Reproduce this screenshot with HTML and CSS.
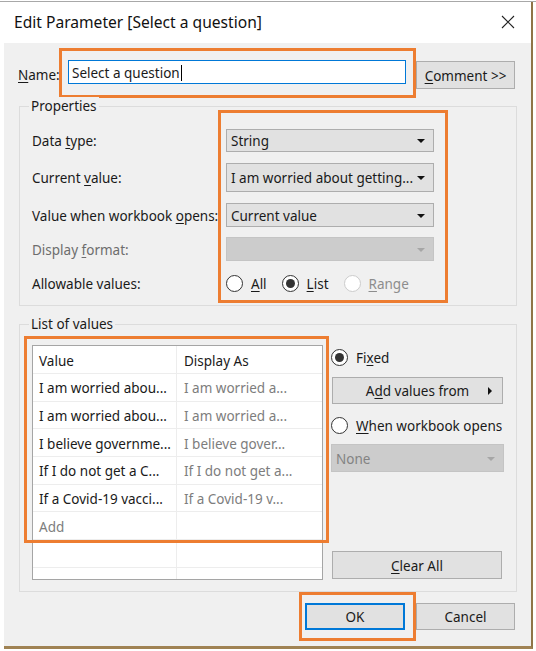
FILE: index.html
```html
<!DOCTYPE html>
<html>
<head>
<meta charset="utf-8">
<link rel="stylesheet" href="styles.css">
</head>
<body>
<div class="page">
  <div class="dialog">
    <div class="titlebar">
      <span class="title">Edit Parameter [Select a question]</span>
      <svg class="close" width="14" height="14" viewBox="0 0 14 14"><path d="M1 1L13 13M13 1L1 13" stroke="#222" stroke-width="1.1" fill="none"/></svg>
    </div>
    <div class="content">
      <div class="name-row">
        <span class="name-label"><u>N</u>ame:</span>
        <div class="hl name-hl">
          <div class="input"><span>Select a question</span><span class="caret"></span></div>
        </div>
        <div class="btn comment-btn"><span><u>C</u>omment &gt;&gt;</span></div>
      </div>

      <div class="group props">
        <span class="group-title">Properties</span>
        <div class="props-body">
          <div class="labels">
            <div class="r1 lbl"><span>Data <u>t</u>ype:</span></div>
            <div class="r2 lbl"><span>Current <u>v</u>alue:</span></div>
            <div class="r3 lbl"><span>Value when workbook <u>o</u>pens:</span></div>
            <div class="r4 lbl disabled-text"><span>Display <u>f</u>ormat:</span></div>
            <div class="r5 lbl"><span>Allowable values:</span></div>
          </div>
          <div class="hl props-hl">
            <div class="r1 combo"><span>String</span><i class="arrow"></i></div>
            <div class="r2 combo"><span>I am worried about getting...</span><i class="arrow"></i></div>
            <div class="r3 combo"><span>Current value</span><i class="arrow"></i></div>
            <div class="r4 combo disabled"><span></span><i class="arrow"></i></div>
            <div class="r5 radios">
              <span class="radio"><span class="circle"></span><span class="rlabel"><u>A</u>ll</span></span>
              <span class="radio"><span class="circle checked"></span><span class="rlabel"><u>L</u>ist</span></span>
              <span class="radio off"><span class="circle"></span><span class="rlabel"><u>R</u>ange</span></span>
            </div>
          </div>
        </div>
      </div>

      <div class="group list">
        <span class="group-title">List of values</span>
        <div class="list-body">
          <div class="table">
            <div class="trow head"><div class="c1">Value</div><div class="c2">Display As</div></div>
            <div class="trow"><div class="c1">I am worried abou...</div><div class="c2 dim">I am worried a...</div></div>
            <div class="trow"><div class="c1">I am worried abou...</div><div class="c2 dim">I am worried a...</div></div>
            <div class="trow"><div class="c1">I believe governme...</div><div class="c2 dim">I believe gover...</div></div>
            <div class="trow"><div class="c1">If I do not get a C...</div><div class="c2 dim">If I do not get a...</div></div>
            <div class="trow"><div class="c1">If a Covid-19 vacci...</div><div class="c2 dim">If a Covid-19 v...</div></div>
            <div class="trow"><div class="c1 dim">Add</div><div class="c2"></div></div>
            <div class="trow"><div class="c1"></div><div class="c2"></div></div>
            <div class="trow"><div class="c1"></div><div class="c2"></div></div>
          </div>
          <div class="side">
            <span class="radio side-radio fixed-row"><span class="circle checked"></span><span class="rlabel">Fi<u>x</u>ed</span></span>
            <div class="btn add-btn"><span>A<u>d</u>d values from</span><i class="rarrow"></i></div>
            <span class="radio side-radio when-row"><span class="circle"></span><span class="rlabel"><u>W</u>hen workbook opens</span></span>
            <div class="combo disabled none-combo"><span>None</span><i class="arrow"></i></div>
            <div class="btn clear-btn"><span><u>C</u>lear All</span></div>
          </div>
        </div>
        <div class="hl list-hl"></div>
      </div>

      <div class="footer">
        <div class="hl ok-hl"><div class="btn ok-btn"><span>OK</span></div></div>
        <div class="btn cancel-btn"><span>Cancel</span></div>
      </div>
    </div>
  </div>
</div>
</body>
</html>
```
FILE: styles.css
```css
* { box-sizing: border-box; }
html, body { margin: 0; padding: 0; }
body {
  width: 536px;
  height: 651px;
  overflow: hidden;
  background: #ffffff;
  font-family: "Noto Sans", "Open Sans", sans-serif;
  font-size: 13.5px;
  color: #1a1a1a;
}
u { text-decoration: underline; text-underline-offset: 2px; text-decoration-thickness: 1px; }

.page {
  padding: 2px 0 0 4px;
  background: linear-gradient(#a8a8a8, #a8a8a8) 0 1px / 100% 1px no-repeat, #fff;
}
.dialog {
  width: 529px;
  height: 647px;
  border-right: 2px solid #8f7447;
  border-bottom: 3px solid #a08354;
  display: flex;
  flex-direction: column;
  background: #f0f0f0;
}
.titlebar {
  height: 41px;
  background: #ffffff;
  display: flex;
  align-items: center;
  justify-content: space-between;
  padding: 0 16px 2px 10px;
  flex: none;
}
.title { font-size: 15.6px; color: #111; }
.close { display: block; }

.content {
  flex: 1;
  padding: 5px 14px 0 14px;
  display: flex;
  flex-direction: column;
}

/* orange annotation boxes */
.hl { border: 3px solid #ed7d31; }

/* Name row */
.name-row { display: flex; align-items: flex-start; height: 50px; flex: none; }
.name-label { width: 41px; margin-top: 18px; }
.name-hl { width: 357px; height: 50px; padding: 9px 7px 0 6px; }
.input {
  height: 24px;
  border: 1px solid #0078d7;
  background: #fff;
  display: flex;
  align-items: center;
  padding: 1px 0 0 3px;
}
.caret { width: 1px; height: 16px; background: #000; margin-left: 1px; }

.btn {
  background: #e1e1e1;
  border: 1px solid #adadad;
  display: flex;
  align-items: center;
  justify-content: center;
  padding-top: 1px;
}
.comment-btn { width: 99px; height: 28px; margin-top: 13px; }

/* Group boxes */
.group {
  position: relative;
  border: 1px solid #dcdcdc;
  margin-left: 1px;
  width: 498px;
  flex: none;
}
.group-title {
  position: absolute;
  top: -10px;
  left: 9px;
  padding: 0 2px;
  background: #f0f0f0;
  line-height: 18px;
}
.props { margin-top: 8px; height: 200px; }
.props-body { display: flex; padding: 3px 0 0 12px; }
.labels { width: 186px; flex: none; padding-top: 19px; }
.props-hl { width: 230px; height: 193px; padding: 16px 0 0 5px; flex: none; }
.lbl { display: flex; align-items: center; padding-top: 1px; white-space: nowrap; }
.r1 { height: 23px; }
.r2 { height: 29px; margin-top: 11px; }
.r3 { height: 24px; margin-top: 11px; }
.r4 { height: 24px; margin-top: 10px; }
.r5 { height: 20px; margin-top: 12px; }
.disabled-text { color: #6d6d6d; }

.combo {
  width: 208px;
  background: #e1e1e1;
  border: 1px solid #adadad;
  display: flex;
  align-items: center;
  justify-content: space-between;
  padding: 1px 8px 0 4px;
  white-space: nowrap;
}
.arrow {
  width: 0; height: 0;
  border-left: 4px solid transparent;
  border-right: 4px solid transparent;
  border-top: 4px solid #111;
}
.combo.disabled { background: #cccccc; border-color: #c4c4c4; color: #838383; }
.combo.disabled .arrow { border-top-color: #a6a6a6; }

.radios { display: flex; align-items: center; }
.radio { display: flex; align-items: center; white-space: nowrap; }
.radios .radio { margin-right: 15px; }
.circle {
  width: 17px; height: 17px;
  border-radius: 50%;
  border: 1px solid #333;
  background: #fff;
  display: flex;
  align-items: center;
  justify-content: center;
  flex: none;
}
.circle.checked::after {
  content: "";
  width: 9px; height: 9px;
  border-radius: 50%;
  background: #333;
}
.rlabel { margin-left: 8px; padding-top: 1px; }
.radio.off .circle { border-color: #cccccc; }
.radio.off .rlabel { color: #8d8d8d; }

/* List of values */
.list { margin-top: 18px; height: 268px; }
.list-body { display: flex; padding: 20px 0 0 12px; }
.table {
  width: 291px;
  height: 235px;
  flex: none;
  border: 1px solid #a5a5a5;
  background: #fff;
  overflow: hidden;
}
.trow {
  display: flex;
  height: 27.7px;
  border-bottom: 1px solid #ededed;
}
.trow.head { height: 28px; }
.c1, .c2 { display: flex; align-items: center; white-space: nowrap; overflow: hidden; padding-top: 2px; }
.c1 { width: 144px; padding-left: 6px; border-right: 1px solid #ededed; }
.c2 { flex: 1; padding-left: 7px; }
.dim { color: #7d7d7d; }

.side {
  width: 173px;
  height: 235px;
  flex: none;
  margin-left: 8px;
  display: flex;
  flex-direction: column;
  align-items: flex-start;
}
.side-radio { height: 20px; }
.fixed-row { margin-top: 2px; }
.add-btn { width: 171px; height: 27px; margin: 10px 0 0 1px; position: relative; }
.rarrow {
  position: absolute;
  right: 10px;
  top: 9px;
  width: 0; height: 0;
  border-top: 4px solid transparent;
  border-bottom: 4px solid transparent;
  border-left: 4px solid #111;
}
.when-row { margin-top: 11px; }
.none-combo { width: 173px; height: 28px; margin-top: 9px; }
.clear-btn { width: 170px; height: 28px; margin: auto 0 1px 1px; }

.list-hl {
  position: absolute;
  left: 4px;
  top: 11px;
  width: 305px;
  height: 207px;
}

/* Footer */
.footer {
  height: 54px;
  display: flex;
  justify-content: flex-end;
  align-items: flex-start;
  padding-right: 2px;
  flex: none;
}
.ok-hl { width: 117px; height: 49px; padding: 8px 8px 0 3px; }
.ok-btn { width: 100px; height: 27px; border: 2px solid #0078d7; }
.cancel-btn { width: 99px; height: 27px; margin-top: 11px; }
```
